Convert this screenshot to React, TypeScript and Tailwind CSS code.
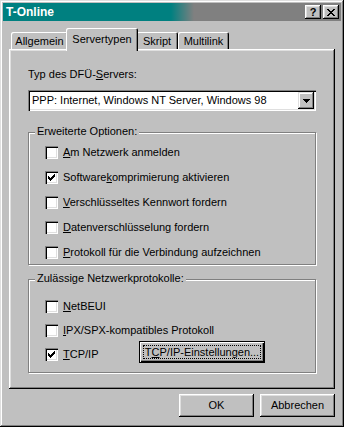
import type { ReactNode } from 'react'

const raised =
  'shadow-[inset_-1px_-1px_#000,inset_1px_1px_#fff,inset_-2px_-2px_#808080,inset_2px_2px_#dfdfdf]'
const frame =
  'shadow-[inset_-1px_-1px_#000,inset_1px_1px_#dfdfdf,inset_-2px_-2px_#808080,inset_2px_2px_#fff]'
const sunken =
  'shadow-[inset_1px_1px_#808080,inset_2px_2px_#000,inset_-1px_-1px_#fff,inset_-2px_-2px_#dfdfdf]'

function Check() {
  return (
    <svg width="7" height="7" viewBox="0 0 7 7" shapeRendering="crispEdges" className="block">
      <path
        fill="#000"
        d="M6 0h1v1h-1z M5 1h2v1h-2z M0 2h1v1h-1z M4 2h3v1h-3z M0 3h2v1h-2z M3 3h3v1h-3z M0 4h5v1h-5z M1 5h3v1h-3z M2 6h1v1h-1z"
      />
    </svg>
  )
}

function Checkbox({ checked, children }: { checked?: boolean; children: ReactNode }) {
  return (
    <div className="flex items-center gap-[5px] h-[13px]">
      <div className={`w-[13px] h-[13px] shrink-0 bg-white pl-[3px] pt-[3px] ${sunken}`}>
        {checked && <Check />}
      </div>
      <span className="whitespace-nowrap">{children}</span>
    </div>
  )
}

function GroupBox({ title, className, children }: { title: string; className: string; children: ReactNode }) {
  return (
    <div
      className={`relative border border-[#808080] shadow-[1px_1px_#fff,inset_1px_1px_#fff] pl-[16px] ${className}`}
    >
      <span className="absolute -top-[8px] left-[6px] bg-[#c0c0c0] px-[2px] whitespace-nowrap">{title}</span>
      {children}
    </div>
  )
}

function Tab({ label, width, active }: { label: string; width: string; active?: boolean }) {
  if (active) {
    return (
      <div
        className={`relative z-10 -mx-[2px] -mb-[2px] h-[23px] ${width} bg-[#c0c0c0] pt-[5px] text-center rounded-tl-[2px] rounded-tr-[2px] shadow-[inset_1px_1px_#fff,inset_-1px_0_#000,inset_-2px_0_#808080]`}
      >
        {label}
      </div>
    )
  }
  return (
    <div
      className={`h-[17px] ${width} pt-[3px] text-center rounded-tl-[2px] rounded-tr-[2px] shadow-[inset_1px_1px_#fff,inset_-1px_0_#000,inset_-2px_0_#808080]`}
    >
      {label}
    </div>
  )
}

export default function App() {
  return (
    <div
      className={`w-[344px] h-[427px] bg-[#c0c0c0] p-[3px] text-black text-[11px] leading-[13px] font-['Liberation_Sans',Arial,sans-serif] ${frame}`}
    >
      {/* Titelleiste */}
      <div className="h-[18px] flex items-center pl-[3px] pr-[2px] bg-[linear-gradient(90deg,#008080_168px,#808080_191px)]">
        <span className="text-white font-bold text-[12px]">T-Online</span>
        <div className="ml-auto flex gap-[2px]">
          <div className={`w-[16px] h-[14px] bg-[#c0c0c0] flex items-center justify-center font-bold text-[11px] leading-none ${raised}`}>
            ?
          </div>
          <div className={`w-[16px] h-[14px] bg-[#c0c0c0] flex items-center justify-center ${raised}`}>
            <svg width="8" height="7" viewBox="0 0 8 7" shapeRendering="crispEdges">
              <path
                fill="#000"
                d="M0 0h2v1h-2z M6 0h2v1h-2z M1 1h2v1h-2z M5 1h2v1h-2z M2 2h4v1h-4z M3 3h2v1h-2z M2 4h4v1h-4z M1 5h2v1h-2z M5 5h2v1h-2z M0 6h2v1h-2z M6 6h2v1h-2z"
              />
            </svg>
          </div>
        </div>
      </div>

      <div className="px-[6px] pt-[7px]">
        {/* Reiter */}
        <div className="h-[21px] flex items-end pl-[2px]">
          <Tab label="Allgemein" width="w-[57px]" />
          <Tab label="Servertypen" width="w-[72px]" active />
          <Tab label="Skript" width="w-[42px]" />
          <Tab label="Multilink" width="w-[51px]" />
        </div>

        <div className={`h-[340px] px-[19px] pt-[19px] ${raised}`}>
          <div className="h-[13px]">
            Typ des DFÜ-<u>S</u>ervers:
          </div>

          <div className={`mt-[9px] h-[21px] bg-white flex items-center p-[2px] ${sunken}`}>
            <span className="pl-[2px] whitespace-nowrap">PPP: Internet, Windows NT Server, Windows 98</span>
            <div className={`ml-auto w-[16px] h-[17px] bg-[#c0c0c0] flex items-center justify-center ${frame}`}>
              <svg width="7" height="4" viewBox="0 0 7 4" shapeRendering="crispEdges">
                <path fill="#000" d="M0 0h7v1h-7z M1 1h5v1h-5z M2 2h3v1h-3z M3 3h1v1h-1z" />
              </svg>
            </div>
          </div>

          <GroupBox title="Erweiterte Optionen:" className="mt-[21px] h-[133px] pt-[13px]">
            <div className="flex flex-col gap-[12px]">
              <Checkbox>
                <u>A</u>m Netzwerk anmelden
              </Checkbox>
              <Checkbox checked>
                Software<u>k</u>omprimierung aktivieren
              </Checkbox>
              <Checkbox>
                <u>V</u>erschlüsseltes Kennwort fordern
              </Checkbox>
              <Checkbox>
                <u>D</u>atenverschlüsselung fordern
              </Checkbox>
              <Checkbox>
                <u>P</u>rotokoll für die Verbindung aufzeichnen
              </Checkbox>
            </div>
          </GroupBox>

          <GroupBox title="Zulässige Netzwerkprotokolle:" className="mt-[14px] h-[94px] pt-[20px]">
            <div className="flex flex-col gap-[11px]">
              <Checkbox>
                <u>N</u>etBEUI
              </Checkbox>
              <Checkbox>
                <u>I</u>PX/SPX-kompatibles Protokoll
              </Checkbox>
              <div className="flex items-start">
                <div className="w-[94px]">
                  <Checkbox checked>
                    <u>T</u>CP/IP
                  </Checkbox>
                </div>
                <div
                  className={`-mt-[7px] w-[126px] h-[22px] bg-[#c0c0c0] border border-black p-[3px] shadow-[inset_1px_1px_#fff,inset_-1px_-1px_#000,inset_-2px_-2px_#808080]`}
                >
                  <div className="w-full h-full border border-dotted border-black flex items-center justify-center whitespace-nowrap">
                    T<u>C</u>P/IP-Einstellungen...
                  </div>
                </div>
              </div>
            </div>
          </GroupBox>
        </div>

        <div className="mt-[5px] flex justify-end gap-[6px]">
          <div className={`w-[75px] h-[23px] flex items-center justify-center ${raised}`}>OK</div>
          <div className={`w-[75px] h-[23px] flex items-center justify-center ${raised}`}>Abbrechen</div>
        </div>
      </div>
    </div>
  )
}
